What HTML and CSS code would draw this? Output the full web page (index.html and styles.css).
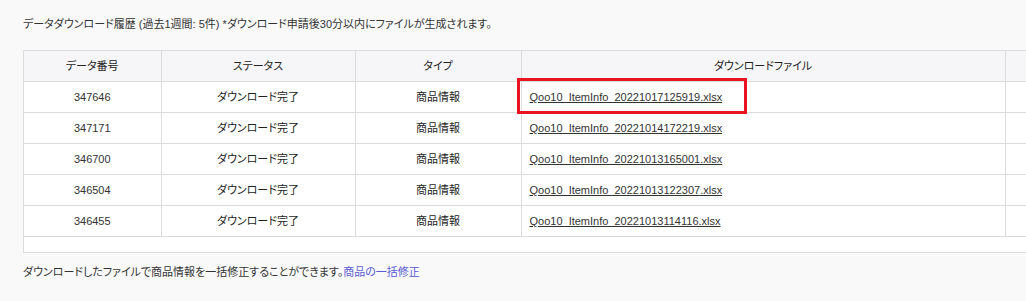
FILE: index.html
```html
<!DOCTYPE html>
<html lang="ja">
<head>
<meta charset="utf-8">
<title>データダウンロード履歴</title>
<link rel="stylesheet" href="styles.css">
</head>
<body>
<div class="page">
  <p class="intro">データダウンロード履歴 (過去1週間: 5件) *ダウンロード申請後30分以内にファイルが生成されます。</p>
  <div class="table-wrap">
    <table class="history">
      <colgroup>
        <col class="c-no"><col class="c-status"><col class="c-type"><col class="c-file"><col class="c-extra">
      </colgroup>
      <thead>
        <tr><th>データ番号</th><th>ステータス</th><th>タイプ</th><th>ダウンロードファイル</th><th></th></tr>
      </thead>
      <tbody>
        <tr><td class="num">347646</td><td>ダウンロード完了</td><td>商品情報</td><td class="file"><span class="mark"><a href="#">Qoo10_ItemInfo_20221017125919.xlsx</a><span class="mark-box"></span></span></td><td></td></tr>
        <tr><td class="num">347171</td><td>ダウンロード完了</td><td>商品情報</td><td class="file"><a href="#">Qoo10_ItemInfo_20221014172219.xlsx</a></td><td></td></tr>
        <tr><td class="num">346700</td><td>ダウンロード完了</td><td>商品情報</td><td class="file"><a href="#">Qoo10_ItemInfo_20221013165001.xlsx</a></td><td></td></tr>
        <tr><td class="num">346504</td><td>ダウンロード完了</td><td>商品情報</td><td class="file"><a href="#">Qoo10_ItemInfo_20221013122307.xlsx</a></td><td></td></tr>
        <tr><td class="num">346455</td><td>ダウンロード完了</td><td>商品情報</td><td class="file"><a href="#">Qoo10_ItemInfo_20221013114116.xlsx</a></td><td></td></tr>
      </tbody>
    </table>
  </div>
  <p class="note">ダウンロードしたファイルで商品情報を一括修正することができます。<a class="note-link" href="#">商品の一括修正</a></p>
</div>
</body>
</html>
```
FILE: styles.css
```css
html, body {
  margin: 0;
  padding: 0;
  background: #f9f9f9;
}
body {
  font-family: "Liberation Sans", "Noto Sans CJK JP", sans-serif;
  font-size: 11px;
  color: #333;
  font-feature-settings: "palt";
}
.page {
  padding: 16px 0 0 23px;
}
.intro {
  margin: 0;
  line-height: 16px;
}
.table-wrap {
  margin-top: 18px;
  background: #fff;
  border: 1px solid #dcdcdc;
  border-right: none;
  padding-bottom: 15px;
}
.history {
  border-collapse: collapse;
  table-layout: fixed;
  width: 100%;
}
.c-no { width: 137px; }
.c-status { width: 194px; }
.c-type { width: 166px; }
.c-file { width: 484px; }
.history th,
.history td {
  height: 30px;
  padding: 0;
  border-left: 1px solid #dcdcdc;
  border-bottom: 1px solid #dcdcdc;
  text-align: center;
  font-weight: normal;
  line-height: 16px;
}
.history th:first-child,
.history td:first-child {
  border-left: none;
}
.history th {
  background: #f6f6f8;
  color: #222;
}
.history td {
  color: #222;
}
.history td.num {
  color: #333;
}
.history td.file {
  text-align: left;
  padding-left: 8px;
}
.history td.file a {
  color: #333;
  text-decoration: underline;
}
.mark {
  position: relative;
  display: inline-block;
}
.mark-box {
  position: absolute;
  left: -13px;
  right: -25px;
  top: -11px;
  bottom: -9px;
  border: 3px solid #e8141f;
}
.note {
  margin: 11px 0 0;
  line-height: 16px;
}
.note-link {
  color: #5a5ad2;
  text-decoration: none;
}
```
